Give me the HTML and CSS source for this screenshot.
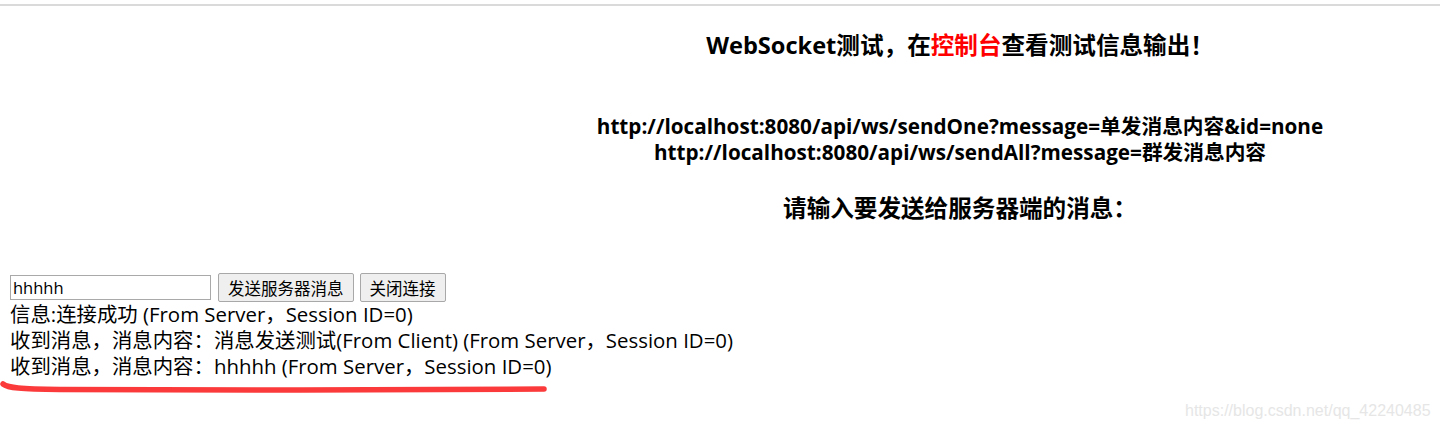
FILE: index.html
```html
<!DOCTYPE html>
<html lang="zh-CN">
<head>
<meta charset="utf-8">
<title>WebSocket测试</title>
<link rel="stylesheet" href="styles.css">
</head>
<body>
<div class="topline"></div>
<div class="center">
  <h3 class="title">WebSocket测试，在<span class="red">控制台</span>查看测试信息输出！</h3>
  <div class="urls">
    <div>http://localhost:8080/api/ws/sendOne?message=单发消息内容&amp;id=none</div>
    <div>http://localhost:8080/api/ws/sendAll?message=群发消息内容</div>
  </div>
  <h3 class="prompt">请输入要发送给服务器端的消息：</h3>
</div>
<div class="form">
  <input class="text" type="text" value="hhhhh">
  <button class="btn">发送服务器消息</button>
  <button class="btn">关闭连接</button>
</div>
<div class="log">
  <div>信息:连接成功 (From Server，Session ID=0)</div>
  <div>收到消息，消息内容：消息发送测试(From Client) (From Server，Session ID=0)</div>
  <div class="marked">收到消息，消息内容：hhhhh (From Server，Session ID=0)
    <svg class="underline" width="560" height="16" viewBox="0 0 560 16"><path d="M3 4 C 8 8, 20 9, 60 9.5 L 300 10 C 420 10, 500 9.5, 544 9" fill="none" stroke="#fb3b3b" stroke-width="5.5" stroke-linecap="round"/></svg>
  </div>
</div>
<div class="watermark">https://blog.csdn.net/qq_42240485</div>
</body>
</html>
```
FILE: styles.css
```css
html, body { margin: 0; padding: 0; background: #fff; }
body { font-family: "Open Sans", "Noto Sans CJK SC", sans-serif; color: #000; width: 1440px; height: 430px; position: relative; overflow: hidden; }
.topline { height: 4px; border-bottom: 2px solid #dadada; }
.center { padding-left: 480px; text-align: center; }
.title { font-size: 23.6px; font-weight: bold; margin: 24px 0 0; line-height: 30px; }
.red { color: #f00; }
.urls { margin-top: 53px; font-size: 20.7px; font-weight: bold; line-height: 26px; }
.prompt { font-size: 23.6px; font-weight: bold; margin: 28px 0 0; line-height: 30px; }
.form { display: flex; align-items: center; gap: 6px; margin: 50px 0 0 10px; }
.text { width: 195px; height: 23px; border: 1px solid #a9a9a9; padding: 0 2px; font: 16.5px "Open Sans", "Noto Sans CJK SC", sans-serif; margin: 0 1px 0 0; }
.btn { height: 29px; padding: 0 9px; font: 16.5px "Open Sans", "Noto Sans CJK SC", sans-serif; background: #efefef; border: 1px solid #a8a8a8; border-radius: 2px; color: #000; }
.log { margin: -1px 0 0 10px; font-size: 20.4px; line-height: 26px; }
.marked { position: relative; }
.underline { position: absolute; left: -10px; top: 27px; }
.watermark { position: absolute; left: 1185px; top: 402px; font: 16px "Liberation Sans", sans-serif; color: #e6e6e6; }
```
